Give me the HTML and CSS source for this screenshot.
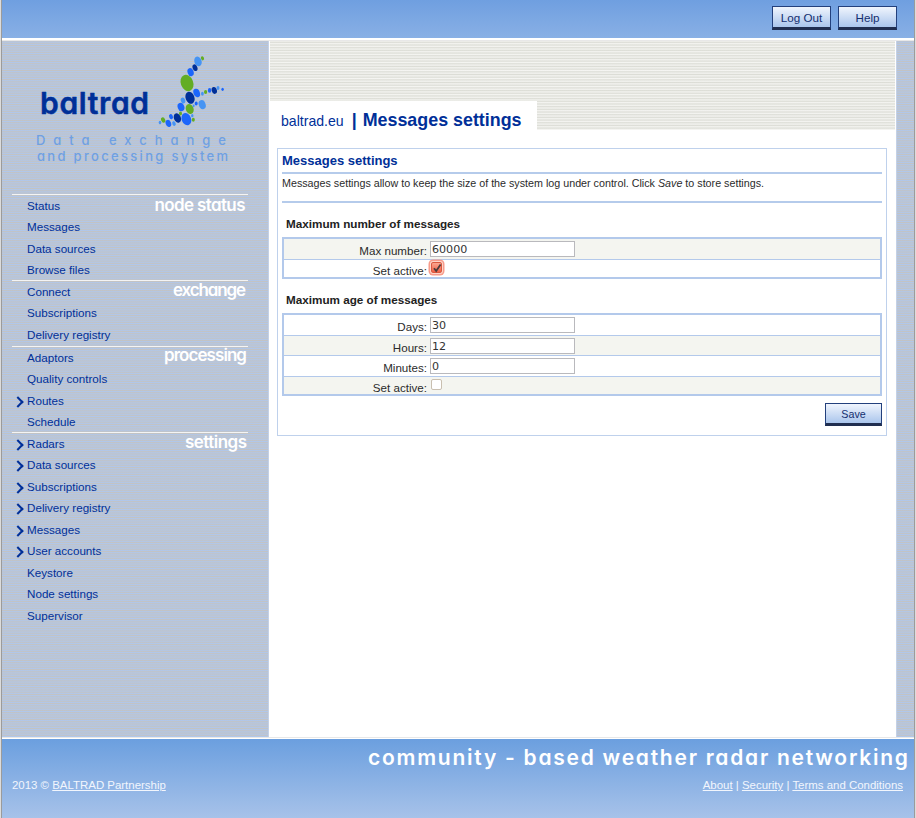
FILE: index.html
```html
<!DOCTYPE html>
<html lang="en">
<head>
<meta charset="utf-8">
<title>BALTRAD | Messages settings</title>
<link rel="stylesheet" href="styles.css">
</head>
<body>
<div class="page">
  <header class="top"><a class="btn">Log Out</a><a class="btn">Help</a></header>
  <div class="middle">
    <aside class="sidebar">
      <svg class="logo" width="266" height="153" viewBox="2 41 266 153">
        <text class="brand" x="40" y="114" textLength="109">baltrad</text>
        <text class="tagline" x="36" y="145" textLength="190">Data exchange</text>
        <text class="tagline" x="37" y="161" textLength="191">and processing system</text>
        <g class="green">
          <ellipse cx="202.5" cy="58.3" rx="1.5" ry="2.1" transform="rotate(-20 202.5 58.3)"/>
          <ellipse cx="187" cy="83" rx="6.2" ry="8.4" transform="rotate(-22 187 83)"/>
          <ellipse cx="189.7" cy="109" rx="3.9" ry="5" transform="rotate(-20 189.7 109)"/>
          <ellipse cx="205.6" cy="92" rx="1.6" ry="2.1"/>
          <ellipse cx="180.5" cy="113.5" rx="1.5" ry="2"/>
          <ellipse cx="163.2" cy="120" rx="2" ry="2.8" transform="rotate(-25 163.2 120)"/>
          <ellipse cx="193.3" cy="119.7" rx="1.5" ry="2"/>
        </g>
        <g class="navy">
          <ellipse cx="195" cy="67.7" rx="2.4" ry="3.4" transform="rotate(-20 195 67.7)"/>
          <ellipse cx="190" cy="97.8" rx="4.4" ry="6.2" transform="rotate(-20 190 97.8)"/>
          <ellipse cx="214.3" cy="90.4" rx="2.6" ry="3.5" transform="rotate(-15 214.3 90.4)"/>
          <ellipse cx="177.4" cy="118" rx="3.5" ry="4.8" transform="rotate(-22 177.4 118)"/>
        </g>
        <g class="blue">
          <ellipse cx="190.6" cy="72.1" rx="3" ry="4.1" transform="rotate(-20 190.6 72.1)"/>
          <ellipse cx="196.7" cy="93" rx="3.2" ry="4.4" transform="rotate(-20 196.7 93)"/>
          <ellipse cx="209.6" cy="90.4" rx="1.7" ry="2.3"/>
          <ellipse cx="222.6" cy="89.3" rx="1.2" ry="1.6"/>
          <ellipse cx="196.2" cy="103.5" rx="1.5" ry="2"/>
          <ellipse cx="181" cy="107" rx="3.3" ry="4.3" transform="rotate(-20 181 107)"/>
          <ellipse cx="171" cy="116.7" rx="1.9" ry="2.6" transform="rotate(-20 171 116.7)"/>
          <ellipse cx="168.4" cy="123.4" rx="2.7" ry="3.7" transform="rotate(-20 168.4 123.4)"/>
          <ellipse cx="186.4" cy="119.2" rx="4.7" ry="6.3" transform="rotate(-22 186.4 119.2)"/>
        </g>
        <g class="sky">
          <ellipse cx="198" cy="61.4" rx="3.6" ry="4.9" transform="rotate(-20 198 61.4)"/>
          <ellipse cx="202.4" cy="93.7" rx="1.4" ry="2"/>
          <ellipse cx="218" cy="88" rx="1.5" ry="2.1"/>
          <ellipse cx="202.2" cy="104.6" rx="3.4" ry="4.6" transform="rotate(-20 202.2 104.6)"/>
          <ellipse cx="183" cy="100.6" rx="2.2" ry="3" transform="rotate(-20 183 100.6)"/>
          <ellipse cx="193.6" cy="105.8" rx="1" ry="1.4"/>
          <ellipse cx="160" cy="122.6" rx="1.3" ry="1.8"/>
          <ellipse cx="174" cy="123.6" rx="1.7" ry="2.4" transform="rotate(-20 174 123.6)"/>
          <ellipse cx="192.3" cy="115.7" rx="1.2" ry="1.6"/>
        </g>
      </svg>
      <nav class="menu">
        <section class="group four">
          <ul><li>Status</li><li>Messages</li><li>Data sources</li><li>Browse files</li></ul>
          <svg class="caption" width="100" height="24"><text x="8.5" y="14.5" textLength="91">node status</text></svg>
        </section>
        <section class="group three">
          <ul><li>Connect</li><li>Subscriptions</li><li>Delivery registry</li></ul>
          <svg class="caption" width="100" height="24"><text x="27" y="14" textLength="73">exchange</text></svg>
        </section>
        <section class="group four">
          <ul><li>Adaptors</li><li>Quality controls</li><li class="more">Routes</li><li>Schedule</li></ul>
          <svg class="caption" width="100" height="24"><text x="18" y="13" textLength="83">processing</text></svg>
        </section>
        <section class="group">
          <ul><li class="more">Radars</li><li class="more">Data sources</li><li class="more">Subscriptions</li><li class="more">Delivery registry</li><li class="more">Messages</li><li class="more">User accounts</li><li>Keystore</li><li>Node settings</li><li>Supervisor</li></ul>
          <svg class="caption" width="100" height="24"><text x="39" y="14" textLength="62">settings</text></svg>
        </section>
      </nav>
    </aside>
    <main class="content">
      <div class="banner"><h1 class="heading"><span class="site">baltrad.eu</span><span class="bar">|</span>Messages settings</h1></div>
      <form class="panel">
        <h2 class="title">Messages settings</h2>
        <p class="intro">Messages settings allow to keep the size of the system log under control. Click <em>Save</em> to store settings.</p>
        <h3 class="subtitle">Maximum number of messages</h3>
        <div class="table">
          <div class="row shade"><label>Max number:</label><input type="text" value="60000"></div>
          <div class="row last"><label>Set active:</label><span class="check on"><svg width="10" height="10" viewBox="0 0 10 10"><path d="M2 5.2 4.2 8 8.6 1.5" fill="none" stroke="#4a3c3c" stroke-width="1.8"/></svg></span></div>
        </div>
        <h3 class="subtitle second">Maximum age of messages</h3>
        <div class="table">
          <div class="row"><label>Days:</label><input type="text" value="30"></div>
          <div class="row shade hours"><label>Hours:</label><input type="text" value="12"></div>
          <div class="row"><label>Minutes:</label><input type="text" value="0"></div>
          <div class="row shade last"><label>Set active:</label><span class="check"></span></div>
        </div>
        <div class="actions"><a class="btn save">Save</a></div>
      </form>
    </main>
    <div class="edge"></div>
  </div>
  <footer class="footer">
    <svg class="slogan" width="912" height="38"><text x="366" y="26" textLength="540">community - based weather radar networking</text></svg>
    <div class="legal"><span>2013 © <a>BALTRAD Partnership</a></span><span><a>About</a> | <a>Security</a> | <a>Terms and Conditions</a></span></div>
  </footer>
</div>
</body>
</html>
```
FILE: styles.css
```css
* { box-sizing: border-box; }
body { margin: 0; font: 11.65px "Liberation Sans", Arial, sans-serif; background: #dcdcdc; color: #2b2b2b; }
.page { width: 914px; height: 818px; margin-left: 1px; border: solid #9b9b9b; border-width: 0 1px; display: flex; flex-direction: column; overflow: hidden; background: #fff; }
.top { height: 38px; flex: none; display: flex; justify-content: flex-end; gap: 7px; padding: 6px 17px 0 0; background: linear-gradient(#6f9fe0, #89b0e5); }
.btn { display: block; width: 59px; height: 24px; border: 1px solid #23407c; border-bottom: 3px solid #202e50; background: linear-gradient(#f0f5fd, #aac5ec); color: #142f70; text-align: center; line-height: 22px; }
.middle { height: 698px; flex: none; margin-top: 2px; padding-top: 1px; border-bottom: 1px solid #e8e8e8; display: flex; background: linear-gradient(#e8e8e8 1px, #fff 1px); }
.sidebar, .edge { background: repeating-linear-gradient(#b0c7eb 0, #c3c3c3 .894px, #b0c7eb 1.788px); }
.sidebar { width: 267px; flex: none; border-right: 1px solid #c4d1e6; }
.edge { width: 18px; flex: none; border-left: 1px solid #c4d1e6; }
.logo { display: block; }
.logo text, .caption text, .slogan text { font-family: Inter, "Noto Sans", sans-serif; font-feature-settings: "cv11", "ss03"; stroke-linejoin: round; }
.brand { font-size: 30px; font-weight: 600; fill: #002f98; stroke: #002f98; stroke-width: .5; }
.tagline { font-size: 13px; font-weight: 500; fill: #6fa0e2; }
.green { fill: #63ad24; } .navy { fill: #002f98; } .blue { fill: #1c66fb; } .sky { fill: #4694f3; }
.menu { padding-left: 10px; width: 246px; }
.group { position: relative; border-top: 1px solid #f4f4f4; }
.four { height: 86px; } .three { height: 66px; }
ul { list-style: none; margin: 0; padding: 0; }
li { height: 21.45px; line-height: 22px; padding-left: 15px; font-size: 11.65px; color: #002f98; position: relative; letter-spacing: 0; white-space: nowrap; }
.more::before { content: ""; position: absolute; left: 2px; top: 8px; width: 6px; height: 6px; border: solid #002f98; border-width: 2.5px 2.5px 0 0; transform: rotate(45deg); }
.caption { position: absolute; top: 1px; right: 2px; overflow: visible; }
.caption text { font-size: 17px; font-weight: 600; fill: #fff; }
.content { width: 627px; flex: none; background: #fff; }
.banner { height: 89px; margin: 0 1px; padding-top: 60px; background: repeating-linear-gradient(#f5f5f2 0, #dcddd6 1.34px, #f5f5f2 2.68px); }
.heading { margin: 0; width: 267px; height: 29px; background: #fff; display: flex; align-items: baseline; padding: 8px 0 0 11px; font-size: 17.86px; line-height: 22px; color: #002f98; white-space: nowrap; }
.site { font-size: 14.1px; font-weight: 400; }
.bar { margin: 0 6px 0 8px; }
.panel { margin: 18px 9px 0 8px; height: 288px; border: 1px solid #bfd1ec; padding: 0 4px; }
.title { margin: 0; height: 25px; line-height: 24px; font-size: 13px; border-bottom: 2px solid #b5cbeb; color: #002f98; }
.intro { margin: 0; height: 29px; line-height: 19px; font-size: 10.72px; border-bottom: 2px solid #b5cbeb; white-space: nowrap; }
.subtitle { margin: 13px 0 6px 4px; line-height: 15px; font-size: 11.7px; color: #222; }
.subtitle.second { margin-top: 13px; }
.table { border: 2px solid #b3c9eb; }
.row { height: 21px; display: flex; align-items: flex-start; padding-top: 2px; border-bottom: 1px solid #b3c9eb; }
.shade { background: #f4f5f0; }
.hours { height: 20px; }
.row.last { height: 17px; border-bottom: 0; padding-top: 1px; }
label { width: 143px; text-align: right; line-height: 19px; margin-right: 3px; font-size: 11.6px; }
.last label { line-height: 20px; }
input { width: 145px; height: 16px; border: 1px solid #b9b9bd; background: #fff; padding: 0 1px; font: 11.1px "DejaVu Sans", sans-serif; color: #333; }
.check { width: 11px; height: 11px; margin: 1px 0 0 1px; border: 1px solid #c9bfb0; border-radius: 2px; background: #fff; }
.on { border-color: #d9583f; background: linear-gradient(#fba58f, #ef6048); box-shadow: 0 0 0 1px #fcd5cb, 0 0 0 2.5px #f79c8b; }
.check svg { display: block; }
.actions { display: flex; justify-content: flex-end; padding-top: 7px; }
.save { width: 57px; height: 23px; font-size: 10.7px; line-height: 21px; }
.footer { flex: 1; margin-top: 1px; background: linear-gradient(#6b9fdf, #a7c2e9); color: #f2f6fd; font-size: 11.45px; }
.slogan { display: block; }
.slogan text { font-size: 21px; font-weight: 600; fill: #fff; }
.legal { display: flex; justify-content: space-between; padding: 0 11px 0 10px; line-height: 17px; }
.legal a { text-decoration: underline; }
```
